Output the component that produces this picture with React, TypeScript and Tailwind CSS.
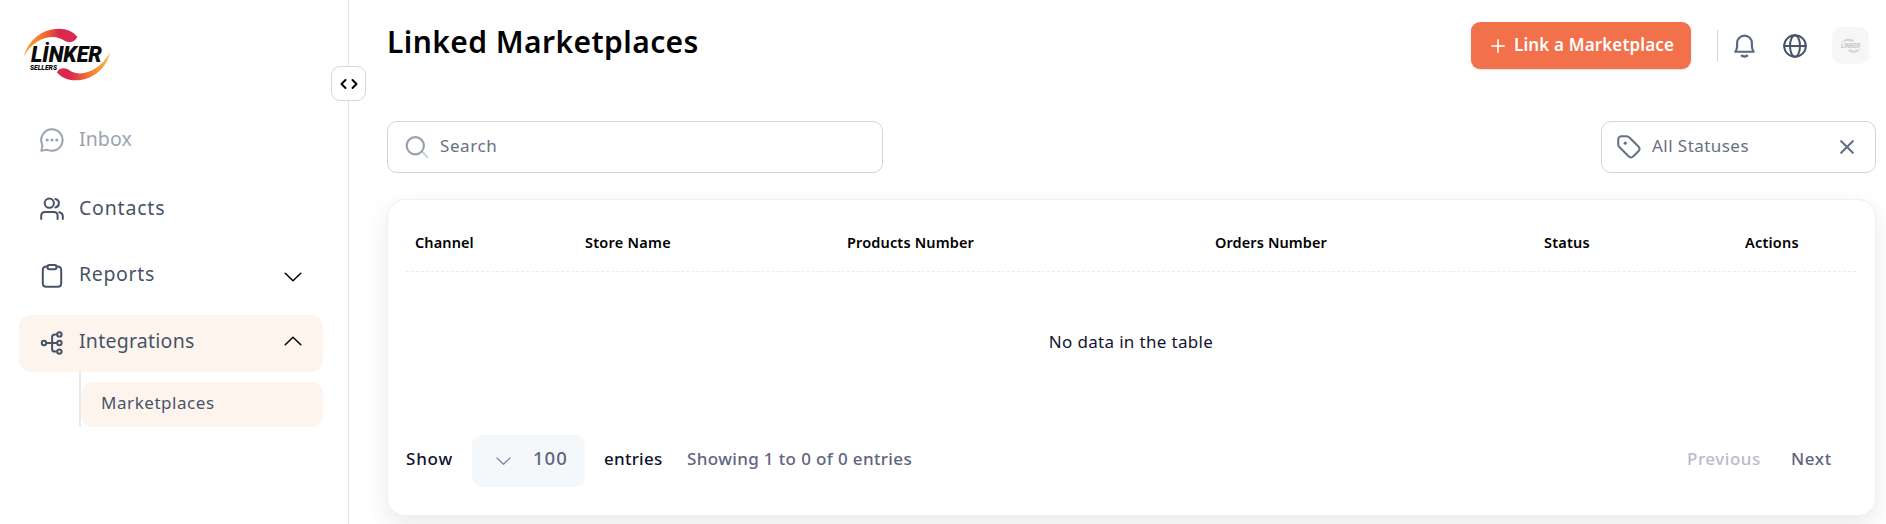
import React from "react";
import clsx from "clsx";

interface IconProps {
  className?: string;
}

function Logo({ className }: IconProps) {
  return (
    <svg viewBox="0 0 88 54" className={className}>
      <defs>
        <linearGradient id="swooshTop" x1="0" x2="1">
          <stop offset="0" stopColor="#f9a63a" />
          <stop offset="0.4" stopColor="#f2682f" />
          <stop offset="0.65" stopColor="#d92a4e" />
          <stop offset="1" stopColor="#d92a4e" />
        </linearGradient>
        <linearGradient id="swooshBottom" x1="0" x2="1">
          <stop offset="0" stopColor="#d92a4e" />
          <stop offset="0.25" stopColor="#d92a4e" />
          <stop offset="0.6" stopColor="#f2782f" />
          <stop offset="1" stopColor="#fbb540" />
        </linearGradient>
      </defs>
      <path
        d="M1 28C5 14 17 1 36 .8c8 0 14 3 18.300 7.900-1 3-4 5.300-8.300 5.300-5 0-7-4.600-16-4.900C18 9.200 8 16 1 28Z"
        fill="url(#swooshTop)"
      />
      <path
        d="M87 24.500C84 39 71 52.300 52.500 52.300c-8 0-14-3-18.500-7.900 1-2.600 3.500-4.100 6.500-4.100 5.500 0 7 4.900 16 5.100C69 45.300 80 37 87 24.500Z"
        fill="url(#swooshBottom)"
      />
      <text
        x="8"
        y="34"
        textLength="71"
        lengthAdjust="spacingAndGlyphs"
        fontFamily="Roboto, sans-serif"
        fontWeight="900"
        fontStyle="italic"
        fontSize="21.500"
        fill="#0a0a0a"
      >
        LİNKER
      </text>
      <text
        x="7"
        y="41.800"
        textLength="27"
        lengthAdjust="spacingAndGlyphs"
        fontFamily="Roboto, sans-serif"
        fontWeight="900"
        fontStyle="italic"
        fontSize="7.500"
        fill="#0a0a0a"
      >
        SELLERS
      </text>
    </svg>
  );
}

function AvatarLogo({ className }: IconProps) {
  return (
    <svg viewBox="0 0 22 16" className={className}>
      <path d="M1 5C3 2 6 .5 9 .8c2 0 4 .8 5 2-1 1.300-2.500 1-4 .6C7 2.500 3 3 1 5Z" fill="#d4d4d4" />
      <path d="M21 10c-2 3.500-5 5-8 4.800-2 0-4-.8-5-2 1-1.300 2.500-1 4-.6 3 .8 7-.2 9-2.200Z" fill="#d4d4d4" />
      <text
        x="1"
        y="10.200"
        textLength="19"
        lengthAdjust="spacingAndGlyphs"
        fontFamily="Roboto, sans-serif"
        fontWeight="700"
        fontStyle="italic"
        fontSize="6.500"
        fill="#c4c4c4"
      >
        LİNKER
      </text>
    </svg>
  );
}

const stroke = {
  fill: "none",
  stroke: "currentColor",
  strokeLinecap: "round" as const,
  strokeLinejoin: "round" as const,
};

function InboxIcon({ className }: IconProps) {
  return (
    <svg viewBox="0 0 24 24" className={className} {...stroke} strokeWidth="2">
      <path d="M12 1.300A10.700 10.700 0 1 1 7.600 21.800C6.300 21.200 3.700 22.600 1.300 22.700 2.300 20 2.600 17.800 2 16A10.700 10.700 0 0 1 12 1.300Z" />
      <path d="M7.200 12h.01M12 12h.01M16.800 12h.01" strokeWidth="3.200" />
    </svg>
  );
}

function ContactsIcon({ className }: IconProps) {
  return (
    <svg viewBox="0 0 24 24" className={className} {...stroke} strokeWidth="2">
      <circle cx="9.300" cy="6.200" r="4.600" />
      <path d="M15.400 1.900c2.300.5 3.500 2.300 3.500 4.300s-1.200 3.700-3.500 4.300" />
      <path d="M1.200 22v-3.300c0-2.300 1.500-3.800 3.800-3.800h8.800c2.300 0 3.800 1.500 3.800 3.800V22" />
      <path d="M19.300 15.200c2.300.5 3.500 1.900 3.500 4.100V22" />
    </svg>
  );
}

function ReportsIcon({ className }: IconProps) {
  return (
    <svg viewBox="0 0 24 24" className={className} {...stroke} strokeWidth="2">
      <path d="M7.500 2.600H6.300c-2.200 0-3.500 1.300-3.500 3.500v13.200c0 2.200 1.300 3.500 3.500 3.500h11.400c2.200 0 3.500-1.300 3.500-3.500V6.100c0-2.200-1.300-3.500-3.500-3.500h-1.200" />
      <rect x="7.500" y="1" width="9" height="4.300" rx="1.800" />
    </svg>
  );
}

function IntegrationsIcon({ className }: IconProps) {
  return (
    <svg viewBox="0 0 24 24" className={className} {...stroke} strokeWidth="2">
      <circle cx="4" cy="12" r="2.200" />
      <circle cx="19.400" cy="3.400" r="2.200" />
      <circle cx="19.400" cy="12" r="2.200" />
      <circle cx="19.400" cy="20.600" r="2.200" />
      <path d="M6.200 12h11M17.200 3.400h-2.400c-1.700 0-2.700 1-2.700 2.700v11.800c0 1.700 1 2.700 2.700 2.700h2.400" />
    </svg>
  );
}

function Chevron({ className }: IconProps) {
  return (
    <svg viewBox="0 0 18 10" className={className} {...stroke} strokeWidth="1.500">
      <path d="m1.200 1.200 7.800 7.500 7.800-7.500" />
    </svg>
  );
}

function SearchIcon({ className }: IconProps) {
  return (
    <svg viewBox="0 0 24 24" className={className} {...stroke}>
      <path d="m17.500 17 4.800 5" stroke="#ccd2dd" strokeWidth="2.200" />
      <circle cx="10.300" cy="10.700" r="8.600" strokeWidth="2.200" />
    </svg>
  );
}

function TagIcon({ className }: IconProps) {
  return (
    <svg viewBox="0 0 24 24" className={className} {...stroke} strokeWidth="2">
      <path d="M1.200 4.500c0-2 1.300-3.300 3.300-3.300h5c1.300 0 2 .4 2.900 1.300l9 9c1.600 1.700 1.600 3.200 0 4.800l-5 5c-1.600 1.600-3.200 1.600-4.800 0l-9-9c-.9-.9-1.400-1.600-1.400-2.900Z" />
      <path d="M8.200 8.200h.01" strokeWidth="3.200" />
    </svg>
  );
}

function BellIcon({ className }: IconProps) {
  return (
    <svg viewBox="0 0 24 26" className={className} fill="none" stroke="currentColor" strokeWidth="2.300">
      <path
        d="M2.400 19h19.200c-1.300-1.900-1.900-3.300-1.900-5.700V10A7.700 7.700 0 0 0 12 2.200 7.700 7.700 0 0 0 4.300 10v3.300c0 2.400-.6 3.800-1.900 5.700Z"
        strokeLinejoin="round"
      />
      <path d="M8.500 22.500c1.800 1.900 5.200 1.900 7 0" strokeWidth="2.600" />
    </svg>
  );
}

function GlobeIcon({ className }: IconProps) {
  return (
    <svg viewBox="0 0 24 24" className={className} {...stroke} strokeWidth="2">
      <circle cx="12" cy="12" r="10.800" />
      <ellipse cx="12" cy="12" rx="5" ry="10.800" />
      <path d="M1.200 12h21.600" />
    </svg>
  );
}

interface NavItemProps {
  label: string;
  icon: React.ReactNode;
  className?: string;
  labelClassName: string;
  active?: boolean;
  chevron?: React.ReactNode;
}

function NavItem({ label, icon, className, labelClassName, active, chevron }: NavItemProps) {
  return (
    <a
      className={clsx(
        "flex h-[57px] w-[304px] items-center rounded-xl pl-[20.5px] pr-[21px]",
        active && "bg-[#fef4ee]",
        className
      )}
    >
      {icon}
      <span className={clsx("ml-[15.5px] text-[19.5px] leading-7", labelClassName)}>{label}</span>
      {chevron}
    </a>
  );
}

const columns = [
  { label: "Channel", className: "tracking-[0.1px]" },
  { label: "Store Name", className: "tracking-[0.25px]" },
  { label: "Products Number", className: "tracking-[0.15px]" },
  { label: "Orders Number", className: "tracking-[0.1px]" },
  { label: "Status", className: "tracking-[0.2px]" },
  { label: "Actions", className: "tracking-[0.2px]" },
];

function Sidebar() {
  return (
    <aside className="relative w-[349px] shrink-0 border-r border-[#e4e4ec] pl-[19px]">
      <Logo className="ml-1 mt-7 h-[54px] w-[88px]" />

      <nav className="mt-[30px] text-[#475467]">
        <NavItem
          label="Inbox"
          icon={<InboxIcon className="mb-px size-6" />}
          className="text-[#9aa3b2]"
          labelClassName="pb-1 tracking-[0.1px]"
        />
        <NavItem
          label="Contacts"
          icon={<ContactsIcon className="mb-px size-6" />}
          className="mt-3"
          labelClassName="pb-1 tracking-[0.8px]"
        />
        <NavItem
          label="Reports"
          icon={<ReportsIcon className="mb-px size-6" />}
          className="mt-2.5"
          labelClassName="pb-1.5 tracking-[0.65px]"
          chevron={<Chevron className="ml-auto w-[18px] text-black" />}
        />
        <NavItem
          label="Integrations"
          icon={<IntegrationsIcon className="mb-px size-6" />}
          className="mt-2.5"
          labelClassName="pb-1.5 tracking-[0.25px]"
          active
          chevron={<Chevron className="mb-[5px] ml-auto w-[18px] rotate-180 text-black" />}
        />
        {/* Sub menu */}
        <div className="ml-[60px] h-[55px] w-[244px] border-l-2 border-[#e8e9ee] pt-2.5">
          <a className="flex h-[45px] items-center rounded-xl bg-[#fef4ee] pb-1 pl-5 text-[17px] tracking-[0.55px]">
            Marketplaces
          </a>
        </div>
      </nav>

      {/* Collapse toggle */}
      <button className="absolute -right-[18px] top-[66px] flex size-[35px] items-center justify-center rounded-[9px] border border-[#d9d9d9] bg-white">
        <svg viewBox="0 0 18 10" className="h-2.5 w-[18px]" {...stroke} stroke="#000" strokeWidth="1.900">
          <path d="M5.500 1 1.500 5l4 4M12.500 1l4 4-4 4" />
        </svg>
      </button>
    </aside>
  );
}

function Header() {
  return (
    <header className="flex h-[47px] items-center">
      <h1 className="pb-[7px] text-[30px] font-semibold leading-9 tracking-[0.42px] text-black">
        Linked Marketplaces
      </h1>
      <button className="ml-auto flex h-[47px] w-[220px] items-center rounded-[9px] bg-[#f2704a] pb-0.5 pl-5 text-[17px] font-semibold text-white shadow-[0_1px_2px_rgba(16,24,40,0.15)]">
        <svg viewBox="0 0 14 14" className="mt-0.5 size-3.5" {...stroke} strokeWidth="1.600">
          <path d="M7 .8v12.400M.8 7h12.400" />
        </svg>
        <span className="ml-[9px] whitespace-nowrap tracking-[0.14px]">Link a Marketplace</span>
      </button>
      <span className="ml-[26px] h-[31px] w-px bg-[#d0d5dd]" />
      <BellIcon className="ml-[15px] h-[26px] w-[23px] text-[#5b6880]" />
      <GlobeIcon className="ml-[27px] size-6 text-[#475467]" />
      <div className="ml-[25px] mr-[7px] flex size-[37px] items-center justify-center rounded-[10px] bg-[#f6f6f6]">
        <AvatarLogo className="w-[22px]" />
      </div>
    </header>
  );
}

export default function App() {
  return (
    <div className="flex h-[524px] w-[1886px] overflow-hidden bg-white font-['Noto_Sans',sans-serif]">
      <Sidebar />

      <main className="ml-[22px] min-w-0 flex-1 overflow-hidden pl-4 pr-2.5 pt-[22px]">
        <Header />

        {/* Filters */}
        <div className="mt-[52px] flex justify-between text-[17px] text-[#667085]">
          <div className="flex h-[52px] w-[496px] items-center rounded-[10px] border border-[#d0d5dd] bg-white pl-[17px]">
            <SearchIcon className="size-6 text-[#98a2b3]" />
            <span className="ml-[11px] pb-0.5 tracking-[0.6px]">Search</span>
          </div>
          <div className="flex h-[52px] w-[275px] items-center rounded-[10px] border border-[#d0d5dd] bg-white pl-[15px] pr-[21px]">
            <TagIcon className="size-6" />
            <span className="ml-[11px] pb-0.5 tracking-[0.45px]">All Statuses</span>
            <svg viewBox="0 0 14 14" className="ml-auto size-3.5" {...stroke} strokeWidth="2.100">
              <path d="m1.200 1.200 11.600 11.600M12.800 1.200 1.200 12.800" />
            </svg>
          </div>
        </div>

        {/* Table */}
        <section className="mt-[26px] flex h-[317px] flex-col rounded-[18px] border border-[#f0f0f1] bg-white pl-[18px] pr-[19px] shadow-[0_10px_24px_rgba(40,50,55,0.1)]">
          <div className="grid h-[72px] shrink-0 grid-cols-[170px_262px_368px_329px_201px_1fr] items-center border-b border-dashed border-[#ececee] pl-[9px] pt-3.5 text-[14.5px] font-semibold text-black">
            {columns.map((column) => (
              <span key={column.label} className={column.className}>
                {column.label}
              </span>
            ))}
          </div>

          <p className="mt-[58px] text-center text-[17px] leading-6 tracking-[0.33px] text-[#101632]">
            No data in the table
          </p>

          {/* Pagination */}
          <div className="mt-[81px] flex h-[52px] items-center text-[17px] font-medium text-[#5f6480]">
            <span className="w-[66px] pb-1 tracking-[0.8px] text-[#0e1330]">Show</span>
            <div className="flex h-[52px] w-[113px] items-center rounded-[10px] bg-[#f4f8fb] pl-6">
              <Chevron className="w-[15px] text-[#7e849c]" />
              <span className="ml-[22px] pb-1.5 text-[18.5px] tracking-[1px]">100</span>
            </div>
            <span className="ml-[19px] w-[83px] pb-1 tracking-[0.25px] text-[#0e1330]">entries</span>
            <span className="pb-1 tracking-[0.36px]">Showing 1 to 0 of 0 entries</span>
            <span className="ml-auto w-[104px] pb-1 tracking-[0.55px] text-[#b9bccb]">Previous</span>
            <span className="w-[65px] pb-1 tracking-[0.6px]">Next</span>
          </div>
        </section>
      </main>
    </div>
  );
}
